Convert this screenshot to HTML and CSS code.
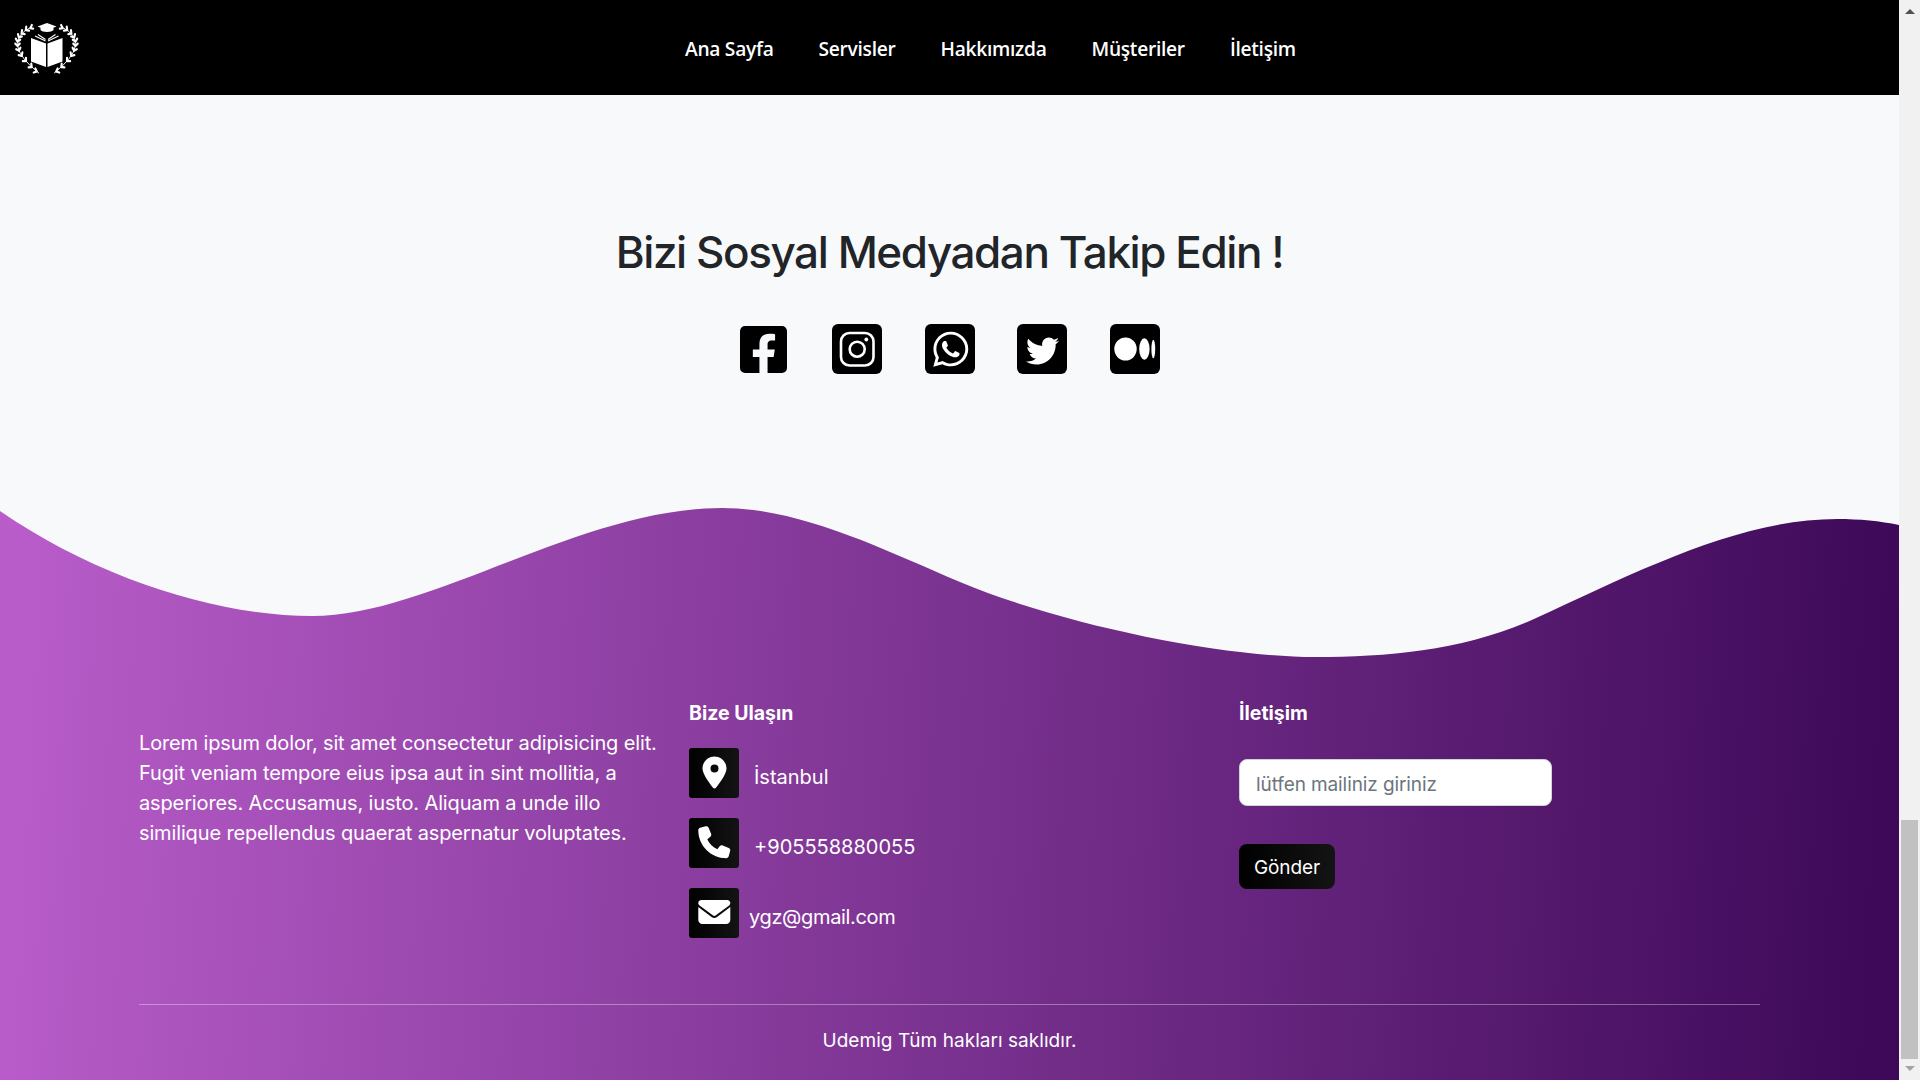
FILE: index.html
```html
<!DOCTYPE html>
<html lang="tr">
<head>
<meta charset="utf-8">
<title>Udemig</title>
<link rel="stylesheet" href="styles.css">
</head>
<body>
<div class="window">
  <div class="page">
    <header class="navbar">
      <a class="brand" href="#" aria-label="Udemig">
        <svg class="brand-logo" viewBox="0 0 93 95" aria-hidden="true">
          <g class="laurel" transform="translate(46.500 48) scale(.92 1) translate(-46.500 -48)">
            <path class="stem" d="M30 27Q-4 42 38 73"/>
            <path d="M29 28l1.600-3M29 28l3 .6M24 30.200l.5-3.600M24 30.200l3.600.4M19.400 33.600l.5-3.400M19.400 33.600l3.400.5M16.400 37.400l-.9-3.300M16.400 37.400l3.300-.9M15 41.600l-1.900-2.900M15 41.600l2.900-1.900M15 46l-2.400-2.400M15 46l2.400-2.400M16.600 50.800l-3-1.600M16.600 50.800l1.600-3M19.600 55.800l-3.400-.7M19.600 55.800l.7-3.400M24.200 61.200h-3.400M24.200 61.200v-3.400M30.400 67l-3.400.4M30.400 67l-.4-3.400M36 71.500l-3.400 1M36 71.500l-1.600-3"/>
          </g>
          <g class="laurel" transform="translate(46.500 48) scale(-.92 1) translate(-46.500 -48)">
            <path class="stem" d="M30 27Q-4 42 38 73"/>
            <path d="M29 28l1.600-3M29 28l3 .6M24 30.200l.5-3.600M24 30.200l3.600.4M19.400 33.600l.5-3.400M19.400 33.600l3.400.5M16.400 37.400l-.9-3.300M16.400 37.400l3.300-.9M15 41.600l-1.900-2.900M15 41.600l2.900-1.900M15 46l-2.400-2.400M15 46l2.400-2.400M16.600 50.800l-3-1.600M16.600 50.800l1.600-3M19.600 55.800l-3.400-.7M19.600 55.800l.7-3.400M24.200 61.200h-3.400M24.200 61.200v-3.400M30.400 67l-3.400.4M30.400 67l-.4-3.400M36 71.500l-3.400 1M36 71.500l-1.600-3"/>
          </g>
          <path class="fill" d="M31 38l15 5.500V67L31 61.500zM62.500 38L47.500 43.500V67l15-5.500z"/>
          <path class="pages" d="M35 36l10.500 5M38 34.500l7.500 5M58.500 36L48 41M55.500 34.500L48 39.500"/>
          <path class="fill" d="M47 23l9.500 3.500-3 1.200V30c-1.500 2.500-11.500 2.500-13 0v-2.300l-3-1.200z"/>
        </svg>
      </a>
      <nav class="nav-links">
        <a href="#">Ana Sayfa</a>
        <a href="#">Servisler</a>
        <a href="#">Hakkımızda</a>
        <a href="#">Müşteriler</a>
        <a href="#">İletişim</a>
      </nav>
    </header>

    <section class="social">
      <h2 class="social-title">Bizi Sosyal Medyadan Takip Edin !</h2>
      <div class="social-row">
        <a class="social-item social-fb" href="#" aria-label="Facebook">
          <svg viewBox="0 32 448 448" class="fb-svg"><path d="M400 32H48A48 48 0 0 0 0 80v352a48 48 0 0 0 48 48h137.25V327.69h-63V256h63v-54.64c0-62.15 37-96.48 93.67-96.48 27.14 0 55.52 4.84 55.52 4.84v61h-31.27c-30.81 0-40.42 19.12-40.42 38.73V256h68.78l-11 71.69h-57.78V480H400a48 48 0 0 0 48-48V80a48 48 0 0 0-48-48z"/></svg>
        </a>
        <a class="social-item" href="#" aria-label="Instagram">
          <svg viewBox="0 0 50 50">
            <rect width="50" height="50" rx="6"/>
            <rect class="ig-line" x="9" y="9" width="32.500" height="32.500" rx="8.500"/>
            <circle class="ig-line" cx="25.200" cy="25.200" r="7.500"/>
            <circle class="fill" cx="34.300" cy="15.500" r="1.900"/>
          </svg>
        </a>
        <a class="social-item" href="#" aria-label="WhatsApp">
          <svg viewBox="0 0 50 50">
            <rect width="50" height="50" rx="6"/>
            <path class="fill" transform="translate(8.300 5.200) scale(.078)" d="M380.900 97.100C339 55.100 283.200 32 223.900 32c-122.400 0-222 99.600-222 222 0 39.100 10.200 77.300 29.600 111L0 480l117.700-30.900c32.400 17.700 68.900 27 106.100 27h.1c122.300 0 224.100-99.600 224.100-222 0-59.300-25.200-115-67.100-157zm-157 341.600c-33.200 0-65.700-8.900-94-25.700l-6.700-4-69.800 18.300L72 359.200l-4.400-7c-18.500-29.400-28.200-63.300-28.200-98.200 0-101.700 82.800-184.500 184.600-184.500 49.300 0 95.600 19.200 130.400 54.100 34.800 34.900 56.200 81.200 56.100 130.500 0 101.800-84.900 184.600-186.600 184.600zm101.200-138.200c-5.500-2.800-32.800-16.200-37.900-18-5.100-1.900-8.800-2.800-12.500 2.800-3.700 5.600-14.300 18-17.600 21.800-3.200 3.700-6.500 4.200-12 1.400-32.600-16.300-54-29.100-75.500-66-5.700-9.800 5.700-9.100 16.300-30.300 1.800-3.700.9-6.900-.5-9.700-1.400-2.800-12.500-30.100-17.100-41.200-4.500-10.800-9.100-9.300-12.500-9.500-3.200-.2-6.900-.2-10.600-.2-3.700 0-9.700 1.400-14.800 6.900-5.100 5.600-19.400 19-19.400 46.300 0 27.300 19.900 53.700 22.600 57.400 2.800 3.700 39.100 59.700 94.800 83.800 35.200 15.200 49 16.500 66.600 13.900 10.700-1.600 32.800-13.400 37.400-26.400 4.600-13 4.600-24.100 3.200-26.400-1.300-2.500-5-3.900-10.500-6.600z"/>
          </svg>
        </a>
        <a class="social-item" href="#" aria-label="Twitter">
          <svg viewBox="0 0 50 50">
            <rect width="50" height="50" rx="6"/>
            <path class="fill" transform="translate(9 10.500) scale(.0645)" d="M459.370 151.716c.325 4.548.325 9.097.325 13.645 0 138.720-105.583 298.558-298.558 298.558-59.452 0-114.680-17.219-161.137-47.106 8.447.974 16.568 1.299 25.340 1.299 49.055 0 94.213-16.568 130.274-44.832-46.132-.975-84.792-31.188-98.112-72.772 6.498.974 12.995 1.624 19.818 1.624 9.421 0 18.843-1.300 27.614-3.573-48.081-9.747-84.143-51.980-84.143-102.985v-1.299c13.969 7.797 30.214 12.670 47.431 13.319-28.264-18.843-46.781-51.005-46.781-87.391 0-19.492 5.197-37.360 14.294-52.954 51.655 63.675 129.300 105.258 216.365 109.807-1.624-7.797-2.599-15.918-2.599-24.040 0-57.828 46.782-104.934 104.934-104.934 30.213 0 57.502 12.670 76.670 33.137 23.715-4.548 46.456-13.320 66.599-25.340-7.798 24.366-24.366 44.833-46.132 57.827 21.117-2.273 41.584-8.122 60.426-16.243-14.292 20.791-32.161 39.308-52.628 54.253z"/>
          </svg>
        </a>
        <a class="social-item" href="#" aria-label="Medium">
          <svg viewBox="0 0 50 50">
            <rect width="50" height="50" rx="6"/>
            <ellipse class="fill" cx="15.500" cy="25" rx="11.200" ry="11.500"/>
            <ellipse class="fill" cx="34.400" cy="25" rx="5.200" ry="10.700"/>
            <ellipse class="fill" cx="43.300" cy="25" rx="1.900" ry="9.300"/>
          </svg>
        </a>
      </div>
    </section>

    <footer class="footer">
      <svg class="wave" viewBox="0 0 1899 150" preserveAspectRatio="none" aria-hidden="true">
        <path transform="translate(0 -508)" d="M0 508V511C100 580 220 616 312 616C430 616 580 508 722 508C800 508 880 548 960 582C1060 624 1220 657 1315 657C1390 657 1465 650 1534 619C1640 570 1740 519 1837 519C1860 519 1880 521 1899 525V508Z"/>
      </svg>
      <div class="footer-inner">
        <div class="footer-grid">
          <p class="about">Lorem ipsum dolor, sit amet consectetur adipisicing elit. Fugit veniam tempore eius ipsa aut in sint mollitia, a asperiores. Accusamus, iusto. Aliquam a unde illo similique repellendus quaerat aspernatur voluptates.</p>

          <div class="contact">
            <h3 class="col-title">Bize Ulaşın</h3>
            <ul class="contact-list">
              <li class="contact-row">
                <span class="contact-icon"><svg viewBox="0 0 50 50"><path transform="translate(13.500 8.500) scale(.0625)" d="M215.700 499.200C267 435 384 279.400 384 192C384 86 298 0 192 0S0 86 0 192c0 87.400 117 243 168.300 307.200c12.300 15.300 35.100 15.300 47.400 0zM192 128a64 64 0 1 1 0 128 64 64 0 1 1 0-128z"/></svg></span>
                <span class="contact-text">İstanbul</span>
              </li>
              <li class="contact-row">
                <span class="contact-icon"><svg viewBox="0 0 50 50"><path transform="translate(9.300 8.200) scale(.0625)" d="M164.900 24.600c-7.700-18.600-28-28.500-47.400-23.200l-88 24C12.100 30.200 0 46 0 64C0 311.400 200.600 512 448 512c18 0 33.800-12.100 38.600-29.500l24-88c5.300-19.400-4.600-39.700-23.200-47.400l-96-40c-16.300-6.800-35.200-2.100-46.300 11.600L304.700 368C234.300 334.700 177.300 277.700 144 207.300L193.300 167c13.700-11.200 18.400-30 11.600-46.300l-40-96z"/></svg></span>
                <span class="contact-text">+905558880055</span>
              </li>
              <li class="contact-row contact-row-mail">
                <span class="contact-icon"><svg viewBox="0 0 50 50"><path transform="translate(9.300 8) scale(.0625)" d="M48 64C21.500 64 0 85.500 0 112c0 15.100 7.100 29.300 19.200 38.400L236.800 313.600c11.400 8.500 27 8.500 38.400 0L492.800 150.400c12.100-9.100 19.200-23.300 19.200-38.400c0-26.500-21.500-48-48-48H48zM0 176V384c0 35.300 28.700 64 64 64H448c35.300 0 64-28.700 64-64V176L294.400 339.200c-22.800 17.100-54 17.100-76.800 0L0 176z"/></svg></span>
                <span class="contact-text">ygz@gmail.com</span>
              </li>
            </ul>
          </div>

          <form class="subscribe">
            <h3 class="col-title">İletişim</h3>
            <input class="mail-input" type="text" placeholder="lütfen mailiniz giriniz">
            <button class="send-btn" type="button">Gönder</button>
          </form>
        </div>
        <hr class="footer-rule">
        <p class="copyright">Udemig Tüm hakları saklıdır.</p>
      </div>
    </footer>
  </div>

  <div class="scrollbar" aria-hidden="true">
    <span class="arrow-up"></span>
    <span class="thumb"></span>
    <span class="arrow-down"></span>
  </div>
</div>
</body>
</html>
```

FILE: styles.css
```css
* { box-sizing: border-box; }

html, body {
  margin: 0;
  height: 1080px;
  overflow: hidden;
}

body {
  font-family: Inter, "Noto Sans", sans-serif;
  background: #f8f9fa;
  color: #212529;
}

a { text-decoration: none; color: inherit; }

.window {
  display: flex;
  height: 1080px;
}

.page {
  width: 1899px;
  flex: none;
  display: flex;
  flex-direction: column;
}

/* navbar */
.navbar {
  height: 95px;
  background: #000;
  display: flex;
  align-items: center;
  flex: none;
}

.brand { display: block; width: 93px; height: 95px; }

.brand-logo { display: block; width: 93px; height: 95px; }

.laurel path {
  fill: none;
  stroke: #fff;
  stroke-width: 2.300;
  stroke-linecap: round;
}

.laurel .stem { stroke-width: 1; }

.brand-logo .fill { fill: #fff; }

.brand-logo .pages {
  fill: none;
  stroke: #fff;
  stroke-width: 1.1;
}

.nav-links {
  display: flex;
  gap: 45px;
  margin: 2px 0 0 592px;
  color: #fff;
  font-family: "Open Sans", sans-serif;
  font-size: 19.200px;
  font-weight: 600;
  letter-spacing: -0.28px;
}

/* social */
.social {
  height: 413px;
  flex: none;
  padding-top: 131px;
  display: flex;
  flex-direction: column;
  align-items: center;
}

.social-title {
  margin: 0;
  font-size: 44px;
  line-height: 53px;
  font-weight: 500;
  letter-spacing: -1.42px;
}

.social-row {
  margin-top: 45px;
  display: flex;
  gap: 42.5px;
}

.social-item { display: block; width: 50px; height: 50px; }

.social-item svg { display: block; width: 50px; height: 50px; }

.social-item .fill { fill: #fff; }

.social-item .ig-line { fill: none; stroke: #fff; stroke-width: 2.600; }

.social-fb { padding-top: 2px; }

.social-item .fb-svg { width: 47px; height: 47px; }

/* footer */
.footer {
  flex: 1;
  color: #fff;
  background: linear-gradient(93deg, #b95dca 0%, #3c0857 100%);
}

.wave {
  display: block;
  width: 1899px;
  height: 150px;
  fill: #f8f9fa;
}

.footer-inner { padding: 44px 139px 0; }

.footer-grid {
  display: grid;
  grid-template-columns: repeat(3, 1fr);
  gap: 29px;
  height: 302px;
}

.about {
  margin: 26px 0 0;
  font-size: 20px;
  line-height: 30px;
  letter-spacing: -0.14px;
}

.col-title {
  margin: 0;
  font-size: 19.500px;
  line-height: 23px;
  font-weight: 700;
}

.contact-list {
  list-style: none;
  margin: 23px 0 0;
  padding: 0;
  display: flex;
  flex-direction: column;
  gap: 20px;
}

.contact-row {
  display: flex;
  align-items: center;
  gap: 15px;
}

.contact-row-mail {
  gap: 10px;
  letter-spacing: -0.35px;
}

.contact-icon {
  width: 50px;
  height: 50px;
  border-radius: 3px;
  background: linear-gradient(90deg, #000, #141414);
  flex: none;
}

.contact-icon svg {
  display: block;
  width: 50px;
  height: 50px;
  fill: #fff;
}

.contact-text {
  font-size: 20px;
  padding-top: 8px;
}

.subscribe {
  display: flex;
  flex-direction: column;
  align-items: flex-start;
}

.mail-input {
  display: block;
  width: 313px;
  height: 47px;
  margin-top: 34px;
  padding: 3px 16px 0;
  border: 1px solid #ced4da;
  border-radius: 8px;
  background: #fff;
  font-family: Inter, sans-serif;
  font-size: 19px;
  letter-spacing: -0.1px;
  color: #212529;
}

.mail-input::placeholder { color: #6c757d; opacity: 1; }

.send-btn {
  width: 96px;
  height: 45px;
  margin-top: 38px;
  padding: 2px 0 0;
  border: 0;
  border-radius: 8px;
  background: linear-gradient(90deg, #000, #141414);
  color: #fff;
  font-family: Inter, sans-serif;
  font-size: 19px;
  letter-spacing: -0.1px;
}

.footer-rule {
  margin: 0;
  border: 0;
  height: 1px;
  background: rgba(255, 255, 255, 0.35);
}

.copyright {
  margin: 22px 0 0;
  text-align: center;
  font-size: 19px;
  line-height: 27px;
  letter-spacing: 0.05px;
}

/* window scrollbar */
.scrollbar {
  width: 21px;
  flex: none;
  background: #f1f1f1;
  display: flex;
  flex-direction: column;
  align-items: center;
}

.arrow-up {
  margin-top: 9px;
  border-left: 5px solid transparent;
  border-right: 5px solid transparent;
  border-bottom: 5px solid #505050;
}

.thumb {
  width: 17px;
  height: 239px;
  margin-top: auto;
  background: #c1c1c1;
}

.arrow-down {
  margin: 7px 0 9px;
  border-left: 5px solid transparent;
  border-right: 5px solid transparent;
  border-top: 5px solid #a3a3a3;
}
```
